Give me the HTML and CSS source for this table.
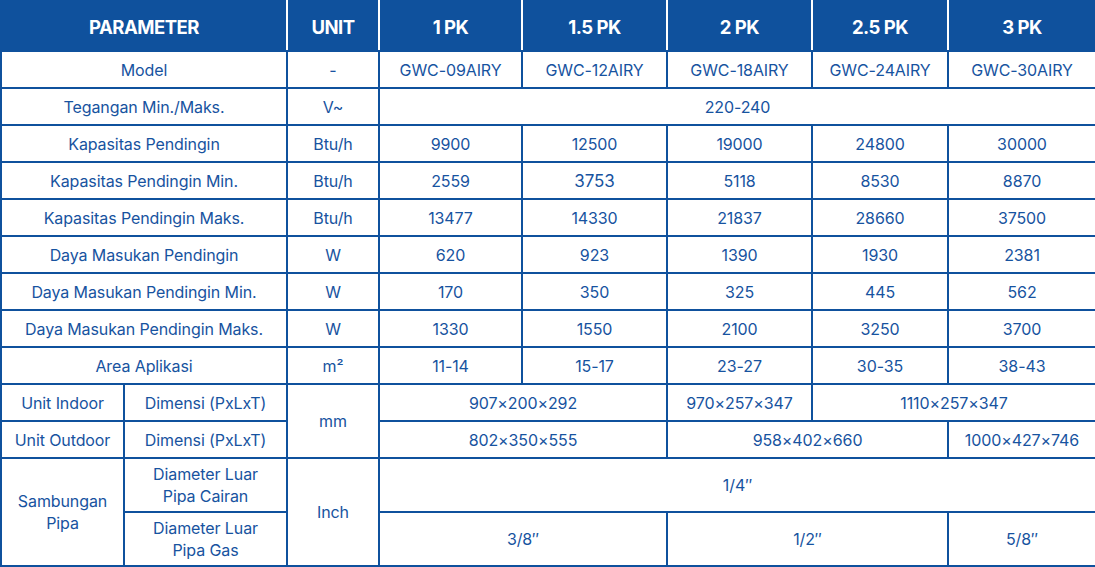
FILE: index.html
```html
<!DOCTYPE html>
<html lang="id">
<head>
<meta charset="utf-8">
<title>Spesifikasi</title>
<link rel="stylesheet" href="styles.css">
</head>
<body>
<table class="spec">
  <colgroup>
    <col class="c-a"><col class="c-b"><col class="c-unit">
    <col class="c-1"><col class="c-2"><col class="c-3"><col class="c-4"><col class="c-5">
  </colgroup>
  <thead>
    <tr class="head">
      <th colspan="2">PARAMETER</th>
      <th>UNIT</th>
      <th>1 PK</th>
      <th>1.5 PK</th>
      <th>2 PK</th>
      <th>2.5 PK</th>
      <th>3 PK</th>
    </tr>
  </thead>
  <tbody>
    <tr><td colspan="2">Model</td><td>-</td><td>GWC-09AIRY</td><td>GWC-12AIRY</td><td>GWC-18AIRY</td><td>GWC-24AIRY</td><td>GWC-30AIRY</td></tr>
    <tr><td colspan="2">Tegangan Min./Maks.</td><td>V~</td><td colspan="5">220-240</td></tr>
    <tr><td colspan="2">Kapasitas Pendingin</td><td>Btu/h</td><td>9900</td><td>12500</td><td>19000</td><td>24800</td><td>30000</td></tr>
    <tr><td colspan="2">Kapasitas Pendingin Min.</td><td>Btu/h</td><td>2559</td><td class="big">3753</td><td>5118</td><td>8530</td><td>8870</td></tr>
    <tr><td colspan="2">Kapasitas Pendingin Maks.</td><td>Btu/h</td><td>13477</td><td>14330</td><td>21837</td><td>28660</td><td>37500</td></tr>
    <tr><td colspan="2">Daya Masukan Pendingin</td><td>W</td><td>620</td><td>923</td><td>1390</td><td>1930</td><td>2381</td></tr>
    <tr><td colspan="2">Daya Masukan Pendingin Min.</td><td>W</td><td>170</td><td>350</td><td>325</td><td>445</td><td>562</td></tr>
    <tr><td colspan="2">Daya Masukan Pendingin Maks.</td><td>W</td><td>1330</td><td>1550</td><td>2100</td><td>3250</td><td>3700</td></tr>
    <tr><td colspan="2">Area Aplikasi</td><td>m²</td><td>11-14</td><td>15-17</td><td>23-27</td><td>30-35</td><td>38-43</td></tr>
    <tr><td>Unit Indoor</td><td>Dimensi (PxLxT)</td><td rowspan="2">mm</td><td colspan="2">907×200×292</td><td>970×257×347</td><td colspan="2">1110×257×347</td></tr>
    <tr><td>Unit Outdoor</td><td>Dimensi (PxLxT)</td><td colspan="2">802×350×555</td><td colspan="2">958×402×660</td><td>1000×427×746</td></tr>
    <tr class="tall"><td rowspan="2">Sambungan<br>Pipa</td><td>Diameter Luar<br>Pipa Cairan</td><td rowspan="2">Inch</td><td colspan="5">1/4″</td></tr>
    <tr class="tall"><td>Diameter Luar<br>Pipa Gas</td><td colspan="2">3/8″</td><td colspan="2">1/2″</td><td>5/8″</td></tr>
  </tbody>
</table>
</body>
</html>
```

FILE: styles.css
```css
html, body {
  margin: 0;
  padding: 0;
  background: #ffffff;
}

.spec {
  width: 1095px;
  table-layout: fixed;
  border-collapse: collapse;
  font-family: Inter, "Noto Sans", sans-serif;
  font-size: 16px;
  letter-spacing: -0.1px;
  color: #1753a0;
  border: 2px solid #0f519d;
  border-top: 0;
}

.c-a { width: 123px; }
.c-b { width: 163px; }
.c-unit { width: 92px; }
.c-1 { width: 143px; }
.c-2 { width: 145px; }
.c-3 { width: 145px; }
.c-4 { width: 136px; }
.c-5 { width: 148px; }

.spec th,
.spec td {
  padding: 0 2px;
  text-align: center;
  vertical-align: middle;
  line-height: 22px;
}

.spec td {
  border: 2px solid #0f519d;
}

.head {
  height: 51px;
}

.head th {
  padding-top: 3px;
  background: #0f519d;
  color: #ffffff;
  font-weight: 700;
  font-size: 18.5px;
  letter-spacing: -0.5px;
  border-left: 2px solid #ffffff;
  border-right: 2px solid #ffffff;
  border-bottom: 2px solid #0f519d;
}

.head th:first-child {
  border-left: 2px solid #0f519d;
}

.head th:last-child {
  border-right: 2px solid #0f519d;
}

.spec tbody tr {
  height: 37px;
}

.spec tbody tr.tall {
  height: 54px;
}

.big {
  font-size: 17px;
}
```
